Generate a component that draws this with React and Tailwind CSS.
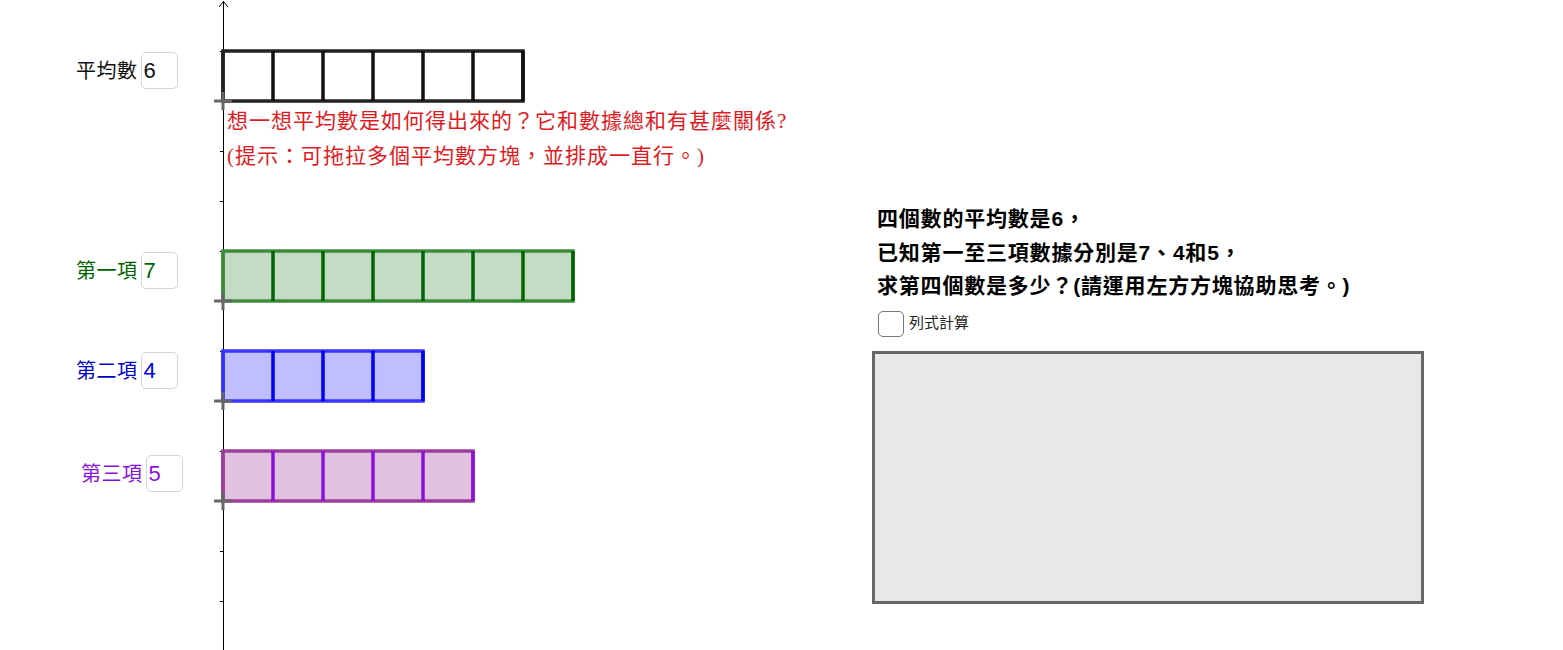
import React from "react";

const rows = [
  { y: 51, n: 6, fill: "#ffffff", edge: "#222222", line: "#111111" },
  { y: 251, n: 7, fill: "#c3dcc3", edge: "#3d8c3d", line: "#006400" },
  { y: 351, n: 4, fill: "#bfbfff", edge: "#3535ff", line: "#0000f0" },
  { y: 451, n: 5, fill: "#e0c2e0", edge: "#9b3f9b", line: "#8a10dc" },
];

const labels = [
  { text: "平均數", value: "6", top: 52, left: 76, color: "text-[#111111]", val: "text-[#111111]" },
  { text: "第一項", value: "7", top: 252, left: 76, color: "text-[#006400]", val: "text-[#006400]" },
  { text: "第二項", value: "4", top: 352, left: 76, color: "text-[#0000cc]", val: "text-[#0000ee]" },
  { text: "第三項", value: "5", top: 455, left: 81, color: "text-[#8a10dc]", val: "text-[#8a10dc]" },
];

function Graph() {
  const ticks = [];
  for (let y = 51; y < 650; y += 50) ticks.push(y);
  return (
    <svg className="absolute inset-0" width="1563" height="650">
      {/* y axis */}
      <line x1="223.5" y1="1" x2="223.5" y2="650" stroke="#000" strokeWidth="1" />
      <polyline points="219,7 223.5,1.5 228,7" fill="none" stroke="#000" strokeWidth="1" />
      {ticks.map((y) => (
        <line key={y} x1="220" y1={y + 0.5} x2="223.5" y2={y + 0.5} stroke="#000" strokeWidth="1" />
      ))}
      {rows.map((r) => {
        const w = r.n * 50;
        return (
          <g key={r.y}>
            <rect x="223" y={r.y} width={w} height="50" fill={r.fill} />
            <rect x="223" y={r.y} width={w} height="50" fill="none" stroke={r.edge} strokeWidth="3.5" />
            {Array.from({ length: r.n + 1 }).map((_, i) => (
              <line
                key={i}
                x1={223 + i * 50}
                y1={r.y}
                x2={223 + i * 50}
                y2={r.y + 50}
                stroke={i === 0 ? r.edge : r.line}
                strokeWidth="3.5"
              />
            ))}
            {/* point */}
            <line x1="214" y1={r.y + 50} x2="232" y2={r.y + 50} stroke="#666" strokeWidth="3" />
            <line x1="223" y1={r.y + 41} x2="223" y2={r.y + 59} stroke="#666" strokeWidth="3" />
          </g>
        );
      })}
    </svg>
  );
}

function Slider({ l }) {
  // label + input box, placed at its point on the canvas
  return (
    <div className="absolute flex items-center gap-[3px]" style={{ top: l.top, left: l.left }}>
      <span
        className={`text-[20px] leading-none tracking-[0.5px] ${l.color} font-['Liberation_Serif','Noto_Sans_CJK_TC',serif]`}
      >
        {l.text}
      </span>
      <div
        className={`w-[37px] h-[37px] rounded-[5px] border border-[#d5d5d5] bg-white flex items-center pl-[2px] text-[22px] leading-none ${l.val} font-['Liberation_Sans',sans-serif]`}
      >
        {l.value}
      </div>
    </div>
  );
}

export default function App() {
  return (
    <div className="relative w-[1563px] h-[650px] bg-white overflow-hidden">
      <Graph />

      {labels.map((l) => (
        <Slider key={l.text} l={l} />
      ))}

      <div className="absolute left-[227px] top-[104px] text-[21px] leading-[35px] tracking-[1px] text-[#e01b1f] font-['Liberation_Serif','Noto_Sans_CJK_TC',serif]">
        <p>想一想平均數是如何得出來的？它和數據總和有甚麼關係?</p>
        <p>(提示：可拖拉多個平均數方塊，並排成一直行。)</p>
      </div>

      <div className="absolute left-[872px] top-[202px] flex flex-col">
        <div className="pl-[5px] text-[21px] leading-[33.5px] tracking-[0.8px] font-bold text-black font-['Liberation_Sans','Noto_Sans_CJK_TC',sans-serif]">
          <p>四個數的平均數是6，</p>
          <p>已知第一至三項數據分別是7、4和5，</p>
          <p>求第四個數是多少？(請運用左方方塊協助思考。)</p>
        </div>
        <div className="mt-[8px] pl-[6px] flex items-center gap-[5px]">
          <div className="w-[26px] h-[26px] rounded-[5px] border border-[#777] bg-white" />
          <span className="text-[15px] leading-none text-[#222] font-['Liberation_Serif','Noto_Sans_CJK_TC',serif]">
            列式計算
          </span>
        </div>
        <div className="mt-[14px] w-[552px] h-[253px] bg-[#e8e8e8] border-[3px] border-[#666]" />
      </div>
    </div>
  );
}
